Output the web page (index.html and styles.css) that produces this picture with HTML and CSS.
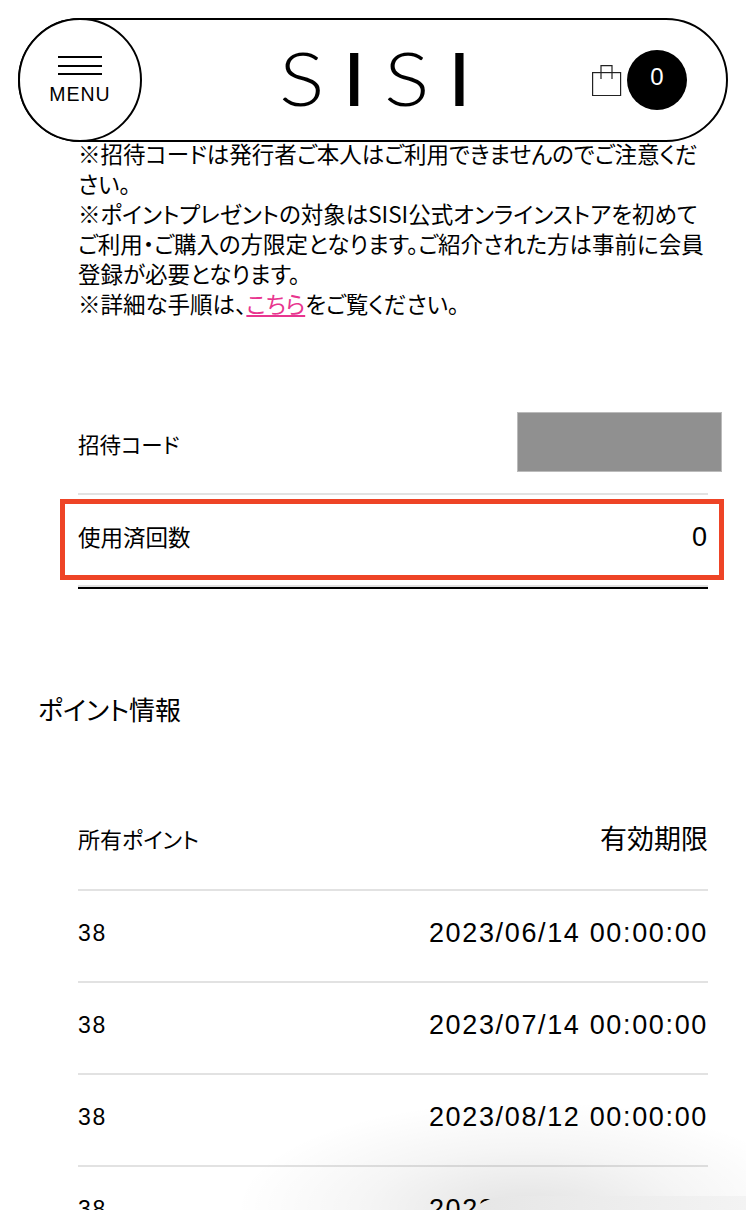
FILE: index.html
```html
<!DOCTYPE html>
<html lang="ja">
<head>
  <meta charset="UTF-8" />
  <title>SISI</title>
  <link rel="stylesheet" href="styles.css">
</head>
<body>
  <header class="header">
    <button class="menu-btn">
      <span class="menu-lines"><i></i><i></i><i></i></span>
      <span class="menu-label">MENU</span>
    </button>
    <div class="logo">S<span class="logo-i">I</span>S<span class="logo-i">I</span></div>
    <div class="cart">
      <svg class="bag" width="30" height="32" viewBox="0 0 30 32" fill="none" stroke="#222" stroke-width="1.2">
        <rect x="0.6" y="8.6" width="28" height="23" />
        <path d="M9 15V1.6H20V15" />
      </svg>
      <span class="cart-count">0</span>
    </div>
  </header>

  <main class="content">
    <p class="notes">
      ※招待コードは発行者ご本人はご利用できませんのでご注意ください。<br>
      ※ポイントプレゼントの対象はSISI公式オンラインストアを初めてご利用・ご購入の方限定となります。ご紹介された方は事前に会員登録が必要となります。<br>
      ※詳細な手順は、<a href="#">こちら</a>をご覧ください。
    </p>

    <div class="invite">
      <div class="invite-row first">
        <span class="label">招待コード</span>
        <div class="masked"></div>
      </div>
      <div class="invite-row used">
        <span>使用済回数</span>
        <span class="num">0</span>
      </div>
    </div>

    <h2 class="section-title">ポイント情報</h2>

    <div class="points">
      <div class="points-row head"><span>所有ポイント</span><span class="right">有効期限</span></div>
      <div class="points-row"><span>38</span><span class="right">2023/06/14 00:00:00</span></div>
      <div class="points-row"><span>38</span><span class="right">2023/07/14 00:00:00</span></div>
      <div class="points-row"><span>38</span><span class="right">2023/08/12 00:00:00</span></div>
      <div class="points-row"><span>38</span><span class="right">2023/09/12 00:00:00</span></div>
    </div>
  </main>

  <div class="float-shade"></div>
  <div class="float-pill"></div>
</body>
</html>
```

FILE: styles.css
```css
* { box-sizing: border-box; margin: 0; padding: 0; }
html, body { height: 1210px; overflow: hidden; }
body {
  background: #fff;
  color: #000;
  font-family: "Noto Sans CJK JP", "Noto Sans", sans-serif;
  font-feature-settings: "palt";
  position: relative;
}

.header {
  position: absolute;
  top: 18px;
  left: 18px;
  width: 710px;
  height: 124px;
  border: 2px solid #000;
  border-radius: 62px;
  background: #fff;
  z-index: 5;
}
.menu-btn {
  position: absolute;
  top: -2px;
  left: -2px;
  width: 124px;
  height: 124px;
  border: 2px solid #000;
  border-radius: 50%;
  background: #fff;
  color: #000;
  display: flex;
  flex-direction: column;
  align-items: center;
  padding-top: 36px;
}
.menu-lines { display: flex; flex-direction: column; gap: 6.5px; }
.menu-lines i { display: block; width: 44px; height: 2px; background: #000; }
.menu-label {
  font-family: "Liberation Sans", sans-serif;
  font-size: 19.5px;
  letter-spacing: 1px;
  line-height: 22px;
  margin-top: 8px;
}
.logo {
  position: absolute;
  left: 259px;
  top: 21px;
  font-family: "Lato", sans-serif;
  font-weight: 300;
  font-size: 74px;
  line-height: 74px;
  letter-spacing: 15.5px;
  transform: scaleX(1.15);
  transform-origin: left center;
}
.logo-i { font-weight: 400; }
.cart {
  position: absolute;
  left: 572px;
  top: 30px;
  display: flex;
  align-items: center;
  gap: 5px;
}
.cart-count {
  width: 60px;
  height: 60px;
  border-radius: 50%;
  background: #000;
  color: #fff;
  font-family: "Liberation Sans", sans-serif;
  font-size: 24px;
  display: flex;
  align-items: center;
  justify-content: center;
  padding-bottom: 6px;
}

.content { padding: 138px 38px 0 78px; }
.notes {
  font-size: 22.5px;
  line-height: 30.1px;
}
.notes a { color: #e8358f; text-decoration: underline; }

.invite { margin-top: 86px; }
.invite-row {
  display: flex;
  justify-content: space-between;
  font-size: 22.5px;
}
.invite-row.first {
  height: 90px;
  align-items: center;
  border-bottom: 2px solid #e2e2e2;
  padding-bottom: 13px;
}
.label { padding-top: 3px; font-size: 21.5px; }
.masked {
  width: 205px;
  height: 60px;
  background: #909090;
  border: 1px solid #bbb;
  margin-right: -14px;
}
.invite-row.used {
  height: 94px;
  border-bottom: 2px solid #000;
  box-shadow: inset 0 -2px #e2e2e2;
  padding-top: 25px;
  position: relative;
}
.invite-row.used::before {
  content: "";
  box-sizing: border-box;
  position: absolute;
  left: -18px;
  right: -16px;
  top: 4px;
  height: 81px;
  border: 5px solid #ee4426;
}
.num {
  font-family: "Liberation Sans", sans-serif;
  font-size: 27px;
  line-height: 32px;
  padding: 1px 1px 0 0;
}

.section-title {
  font-size: 26px;
  font-weight: 400;
  line-height: 34px;
  margin: 103px 0 0 -40px;
}

.points { margin-top: 73px; }
.points-row {
  display: flex;
  justify-content: space-between;
  align-items: center;
  height: 92px;
  border-bottom: 2px solid #e2e2e2;
  padding-bottom: 4px;
  font-family: "Liberation Sans", sans-serif;
  font-size: 23px;
  letter-spacing: 1.6px;
}
.points-row.head {
  font-family: "Noto Sans CJK JP", sans-serif;
  font-size: 22px;
  letter-spacing: 0;
  padding-bottom: 12px;
}
.points-row .right { font-size: 27px; letter-spacing: 1.65px; }
.points-row.head .right { font-size: 27px; letter-spacing: 0; }

.float-shade {
  position: absolute;
  left: 220px;
  right: 0;
  top: 1100px;
  bottom: 0;
  background: radial-gradient(ellipse 290px 110px at 58% 100%, rgba(0,0,0,0.11), rgba(0,0,0,0.04) 55%, rgba(0,0,0,0) 100%);
  z-index: 3;
}
.float-pill {
  position: absolute;
  left: 476px;
  right: 0;
  bottom: 0;
  height: 14px;
  border-radius: 40px 0 0 0 / 14px 0 0 0;
  background: linear-gradient(to right, #e6e6e6, #f3f3f3);
  z-index: 4;
}
```
